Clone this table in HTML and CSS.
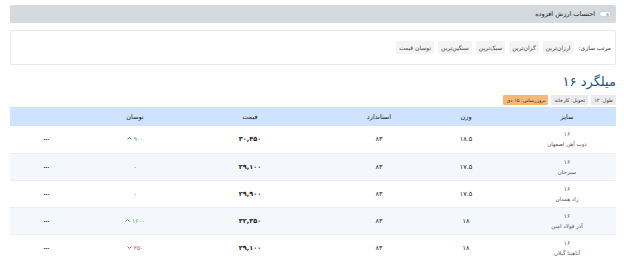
FILE: index.html
```html
<!DOCTYPE html>
<html lang="fa" dir="rtl">
<head>
<meta charset="utf-8">
<title>میلگرد ۱۶</title>
<link rel="stylesheet" href="styles.css">
</head>
<body>
<div class="page">
  <div class="vat-bar">
    <span class="toggle"><span class="knob"></span></span>
    <span class="vat-label">احتساب ارزش افزوده</span>
  </div>

  <div class="sort-card">
    <span class="sort-label">مرتب سازی:</span>
    <span class="sort-btn">ارزان‌ترین</span>
    <span class="sort-btn">گران‌ترین</span>
    <span class="sort-btn">سبک‌ترین</span>
    <span class="sort-btn">سنگین‌ترین</span>
    <span class="sort-btn">نوسان قیمت</span>
  </div>

  <h2 class="title">میلگرد ۱۶</h2>
  <div class="badges">
    <span class="badge">طول: ۱۲</span>
    <span class="badge">تحویل: کارخانه</span>
    <span class="badge badge-warn">بروزرسانی: ۱۵ دی</span>
  </div>

  <table class="prices">
    <thead>
      <tr><th class="c-size">سایز</th><th class="c-weight">وزن</th><th class="c-std">استاندارد</th><th class="c-price">قیمت</th><th class="c-change">نوسان</th><th class="c-more"></th></tr>
    </thead>
    <tbody>
      <tr>
        <td class="c-size"><div class="size">۱۶</div><div class="maker">ذوب آهن اصفهان</div></td>
        <td>۱۸.۵</td><td class="c-std">۸۳</td><td class="price">۳۰,۴۵۰</td>
        <td><span class="chg up">۹۰۰<svg viewBox="0 0 10 6" class="arr"><path d="M1 5 L5 1 L9 5" /></svg></span></td>
        <td><span class="more">•••</span></td>
      </tr>
      <tr class="alt">
        <td class="c-size"><div class="size">۱۶</div><div class="maker">سیرجان</div></td>
        <td>۱۷.۵</td><td class="c-std">۸۳</td><td class="price">۲۹,۱۰۰</td>
        <td><span class="chg zero">۰</span></td>
        <td><span class="more">•••</span></td>
      </tr>
      <tr>
        <td class="c-size"><div class="size">۱۶</div><div class="maker">راد همدان</div></td>
        <td>۱۷.۵</td><td class="c-std">۸۳</td><td class="price">۲۹,۹۰۰</td>
        <td><span class="chg zero">۰</span></td>
        <td><span class="more">•••</span></td>
      </tr>
      <tr class="alt">
        <td class="c-size"><div class="size">۱۶</div><div class="maker">آذر فولاد امین</div></td>
        <td>۱۸</td><td class="c-std">۸۳</td><td class="price">۳۲,۳۵۰</td>
        <td><span class="chg up">۱۶۰۰<svg viewBox="0 0 10 6" class="arr"><path d="M1 5 L5 1 L9 5" /></svg></span></td>
        <td><span class="more">•••</span></td>
      </tr>
      <tr>
        <td class="c-size"><div class="size">۱۶</div><div class="maker">آناهیتا گیلان</div></td>
        <td>۱۸</td><td class="c-std">۸۳</td><td class="price">۲۹,۱۰۰</td>
        <td><span class="chg down">۳۵۰<svg viewBox="0 0 10 6" class="arr"><path d="M1 1 L5 5 L9 1" /></svg></span></td>
        <td><span class="more">•••</span></td>
      </tr>
    </tbody>
  </table>
</div>
</body>
</html>
```

FILE: styles.css
```css
* { box-sizing: border-box; }
html, body { margin: 0; padding: 0; background: #fff; }
body {
  font-family: "DejaVu Sans", "Noto Sans", sans-serif;
  color: #212529;
  font-size: 7px;
}
.page {
  margin: 5px 8px 0 10px;
}
.vat-bar {
  height: 18px;
  background: #d4dadd;
  border-radius: 2px;
  display: flex;
  align-items: center;
  gap: 4px;
  padding-right: 5px;
}
.toggle {
  width: 12px;
  height: 6px;
  border-radius: 3px;
  background: #fff;
  border: 1px solid #c9ced2;
  display: flex;
  align-items: center;
  justify-content: flex-start;
  padding: 0 1px;
}
.knob {
  width: 3px;
  height: 3px;
  border-radius: 50%;
  background: #b9bec3;
}
.vat-label { font-size: 6.5px; color: #222; }

.sort-card {
  margin-top: 7px;
  height: 35px;
  border: 1px solid #e7e9eb;
  border-radius: 2px;
  display: flex;
  align-items: center;
  gap: 4px;
  padding-right: 4px;
}
.sort-label { font-size: 6px; margin-left: 1px; color: #333; }
.sort-btn {
  background: #f3f4f5;
  border-radius: 2px;
  padding: 3px 3px;
  font-size: 6px;
  line-height: 7px;
  color: #444;
}

.title {
  margin: 8px 0 0;
  font-size: 13px;
  line-height: 18px;
  font-weight: normal;
  color: #1f5587;
}
.badges {
  margin-top: 4px;
  display: flex;
  gap: 3px;
}
.badge {
  background: #e9ebed;
  font-size: 5px;
  line-height: 6px;
  padding: 2px 3px;
  border-radius: 1px;
  color: #333;
}
.badge-warn { background: #f6b877; }

.prices {
  margin-top: 2px;
  width: 100%;
  border-collapse: collapse;
  table-layout: fixed;
}
.prices th.c-size { width: 126px; }
.prices th.c-weight { width: 48px; }
.prices th.c-std { width: 144px; }
.prices th.c-price { width: 96px; }
.prices th.c-change { width: 134px; }
.prices th.c-more { width: 58px; }
.prices th {
  background: #cfe2ff;
  height: 19px;
  font-weight: normal;
  font-size: 6.5px;
  text-align: center;
  padding: 0;
  color: #222;
}
.prices td {
  height: 27px;
  text-align: center;
  vertical-align: middle;
  padding: 0;
  border-bottom: 1px solid #eceef0;
  font-size: 6.5px;
  color: #222;
}
.prices .c-size { padding-left: 28px; }
.prices .c-std { padding-left: 18px; }
.prices tr.alt td { background: #f4f7fc; }
.size { font-size: 6px; color: #555; line-height: 9px; }
.maker { font-size: 5.5px; color: #555; line-height: 9px; margin-top: 2px; }
.price { font-weight: bold; font-size: 7.5px; }
.chg { display: inline-flex; align-items: center; gap: 2px; font-size: 6px; }
.up { color: #3aa85a; }
.down { color: #d9485a; }
.zero { color: #333; }
.arr {
  width: 5px;
  height: 3px;
  fill: none;
  stroke: currentColor;
  stroke-width: 2;
}
.more { font-size: 4px; letter-spacing: -0.5px; color: #333; margin-left: 14px; }
```
